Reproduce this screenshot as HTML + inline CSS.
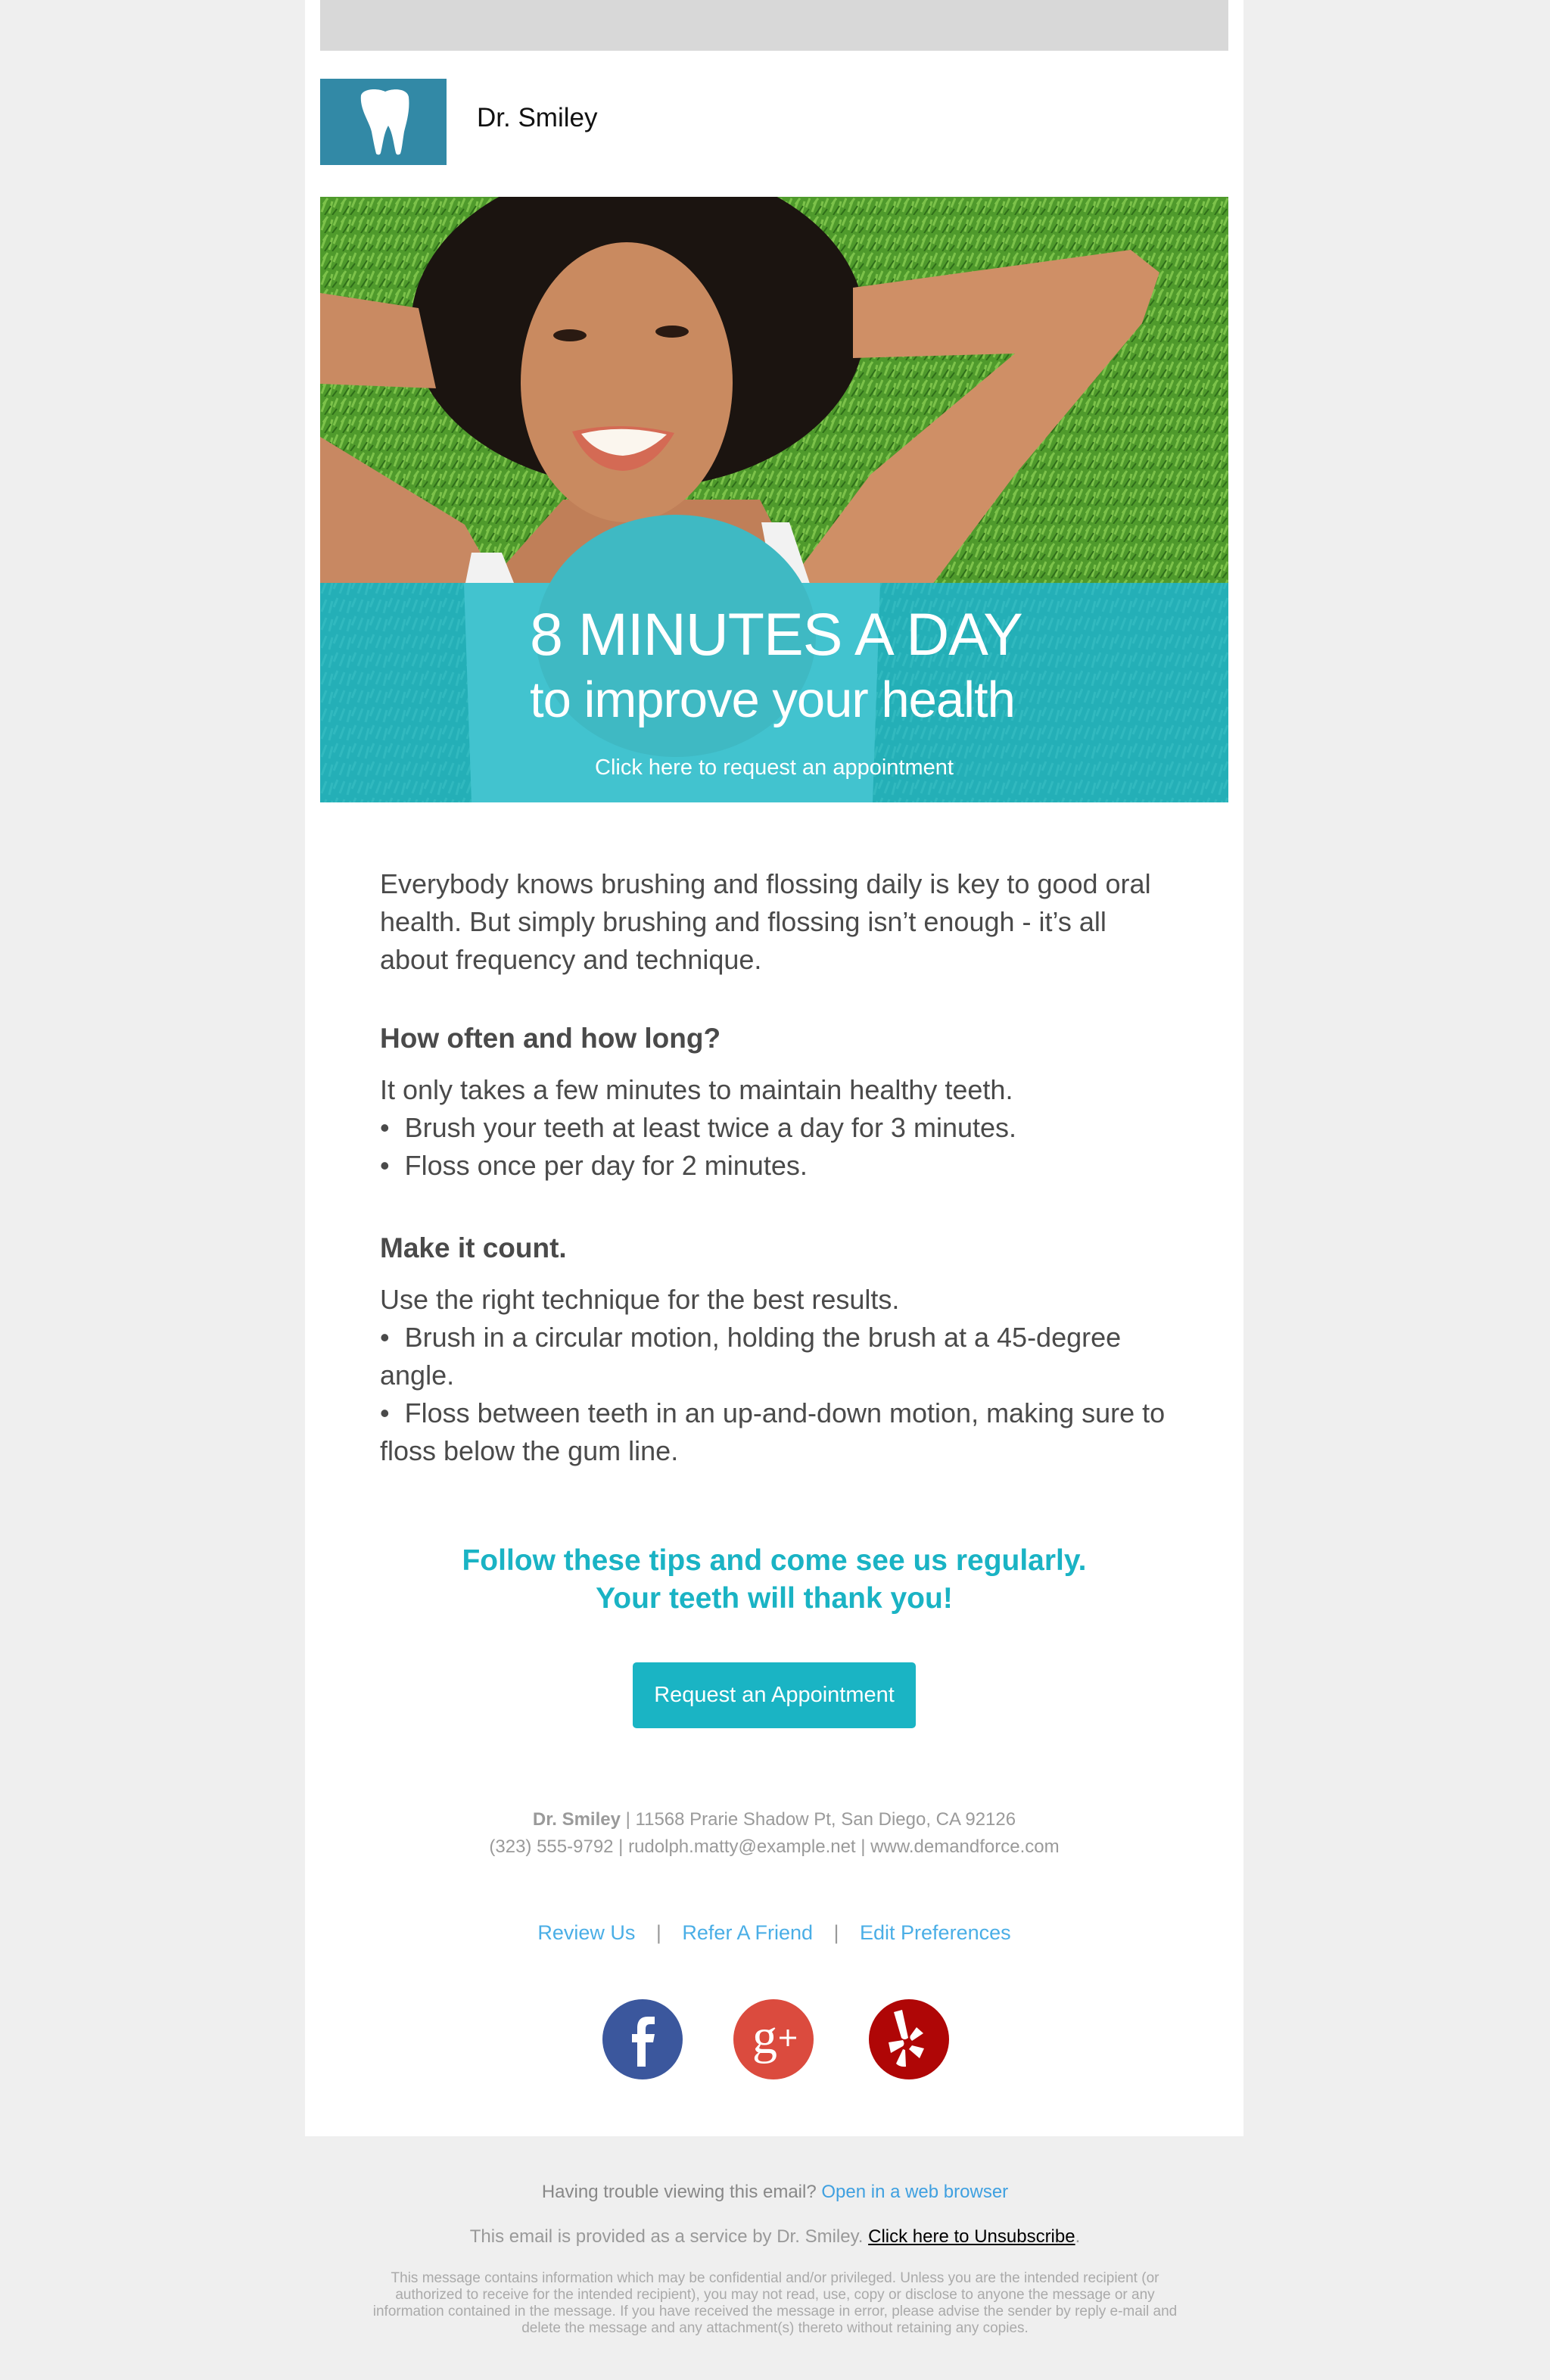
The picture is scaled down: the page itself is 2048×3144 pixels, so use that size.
<!DOCTYPE html>
<html><head><meta charset="utf-8">
<style>
*{margin:0;padding:0;box-sizing:border-box}
body{width:2048px;height:3144px;background:#efefef;font-family:"Liberation Sans",Arial,sans-serif;position:relative;overflow:hidden}
.abs{position:absolute}
#wrap{position:absolute;left:403px;top:0;width:1240px;height:2822px;background:#fff}
.body{position:absolute;left:502px;width:1045px;color:#4a4a4a;font-size:36px;line-height:50px}
.c{position:absolute;left:403px;width:1240px;text-align:center}
</style></head><body>
<div id="wrap"></div>
<div class="abs" style="left:423px;top:0;width:1200px;height:67px;background:#d8d8d8"></div>
<div class="abs" style="left:423px;top:104px;width:167px;height:114px;background:#3289a6">
<svg width="167" height="114" viewBox="0 0 167 114"><path d="M54 22 C57 13 75 12 86 17 C97 12 115 13 117 24 C119 42 114 58 111 70 C109 82 108 94 106 99 C104 101 101 101 100 98 C97 86 96 72 90 62 C84 72 83 86 80 98 C79 101 76 101 74 99 C72 91 70 81 68 70 C65 57 52 40 54 22 Z" fill="#fff"/></svg>
</div>
<div class="abs" style="left:630px;top:136px;font-size:35px;color:#111">Dr. Smiley</div>

<div class="abs" style="left:423px;top:260px;width:1200px;height:800px;overflow:hidden">
<svg width="1200" height="800" viewBox="0 0 1200 800">
<defs>
<pattern id="g" width="24" height="24" patternUnits="userSpaceOnUse"><rect width="24" height="24" fill="#4f9a2c"/><path d="M2 20 L8 4 M12 22 L16 6 M18 14 L23 2 M4 10 L10 2" stroke="#7cc24a" stroke-width="3"/><path d="M6 24 L14 12 M16 24 L22 16" stroke="#2f6e1a" stroke-width="2"/></pattern>
<pattern id="g2" width="24" height="24" patternUnits="userSpaceOnUse"><rect width="24" height="24" fill="#23aab0"/><path d="M2 20 L8 4 M12 22 L16 6 M18 14 L23 2" stroke="#3fc0c2" stroke-width="3"/></pattern>
</defs>
<rect width="1200" height="800" fill="url(#g)"/>
<ellipse cx="420" cy="170" rx="300" ry="215" fill="#1b1410"/>
<polygon points="0,127 130,147 153,253 0,247" fill="#c98a62"/>
<polygon points="0,317 191,433 240,520 0,520" fill="#c88862"/>
<polygon points="704,120 1071,70 1109,100 1086,167 918,367 803,520 612,520 727,367 918,207 704,213" fill="#cf8f66"/>
<polygon points="321,400 581,400 643,520 214,520" fill="#c07f58"/>
<polygon points="200,470 240,470 260,520 190,520" fill="#f2f2f2"/>
<polygon points="583,430 620,430 650,520 600,520" fill="#f2f2f2"/>
<ellipse cx="405" cy="245" rx="140" ry="185" fill="#c98a60"/>
<ellipse cx="330" cy="183" rx="22" ry="8" fill="#2a1a12"/>
<ellipse cx="465" cy="178" rx="22" ry="8" fill="#2a1a12"/>
<path d="M333 310 Q398 295 468 312 Q440 360 400 362 Q355 360 333 310 Z" fill="#d46a54"/>
<path d="M345 313 Q398 300 458 314 Q430 340 400 342 Q365 340 345 313 Z" fill="#fbf6ee"/>
<rect y="510" width="1200" height="290" fill="url(#g2)"/>
<path d="M0 510 H1200 V800 H0 Z" fill="#27b2bd" opacity="0.55"/>
<polygon points="190,510 740,510 730,800 200,800" fill="#42c3cf"/>
<ellipse cx="470" cy="580" rx="185" ry="160" fill="#3fb9c3"/>
</svg>
</div>

<div class="abs" style="left:700px;top:793px;font-size:79px;color:#fff;line-height:90px;letter-spacing:-1px">8 MINUTES A DAY</div>
<div class="abs" style="left:700px;top:880px;font-size:67px;color:#fff;line-height:90px;letter-spacing:-1px">to improve your health</div>
<div class="abs" style="left:423px;width:1200px;top:998px;text-align:center;font-size:29px;color:#fff">Click here to request an appointment</div>

<div class="body" style="top:1143px">Everybody knows brushing and flossing daily is key to good oral health. But simply brushing and flossing isn’t enough - it’s all about frequency and technique.</div>
<div class="body" style="top:1347px;font-size:37px;font-weight:bold">How often and how long?</div>
<div class="body" style="top:1415px">It only takes a few minutes to maintain healthy teeth.<br>•&nbsp; Brush your teeth at least twice a day for 3 minutes.<br>•&nbsp; Floss once per day for 2 minutes.</div>
<div class="body" style="top:1624px;font-size:37px;font-weight:bold">Make it count.</div>
<div class="body" style="top:1692px">Use the right technique for the best results.<br>•&nbsp; Brush in a circular motion, holding the brush at a 45-degree angle.<br>•&nbsp; Floss between teeth in an up-and-down motion, making sure to floss below the gum line.</div>

<div class="c" style="top:2037px;font-size:39px;line-height:50px;color:#1ab3c4;font-weight:bold">Follow these tips and come see us regularly.<br>Your teeth will thank you!</div>
<div class="abs" style="left:836px;top:2196px;width:374px;height:87px;background:#1ab4c4;border-radius:5px;color:#fff;font-size:29px;text-align:center;line-height:87px">Request an Appointment</div>

<div class="c" style="top:2386px;font-size:24px;line-height:36px;color:#9a9a9a"><b>Dr. Smiley</b> | 11568 Prarie Shadow Pt, San Diego, CA 92126<br>(323) 555-9792 | rudolph.matty@example.net | www.demandforce.com</div>
<div class="c" style="top:2538px;font-size:27px;color:#4aaee6">Review Us <span style="color:#999;margin:0 20px">|</span> Refer A Friend <span style="color:#999;margin:0 20px">|</span> Edit Preferences</div>

<svg class="abs" style="left:796px;top:2640px" width="460" height="108" viewBox="0 0 460 108">
<circle cx="53" cy="54" r="53" fill="#3b579d"/>
<path d="M57 90 V58 H67 L69 47 H57 V40 C57 36 59 34 63 34 H69 V24 H60 C50 24 46 30 46 39 V47 H39 V58 H46 V90 Z" fill="#fff"/>
<circle cx="226" cy="54" r="53" fill="#db4b3e"/>
<text x="198" y="72" font-family="Liberation Serif,serif" font-size="66" fill="#fff">g</text>
<path d="M234 52 H256 M245 41 V63" stroke="#fff" stroke-width="3"/>
<circle cx="405" cy="54" r="53" fill="#af0606"/>
<path d="M385 18 L396 15 L404 52 Q399 56 395 52 Z" fill="#fff"/>
<path d="M415 38 L424 46 L409 56 Q405 52 407 49 Z" fill="#fff"/>
<path d="M378 58 L397 55 Q400 60 397 63 L381 72 Z" fill="#fff"/>
<path d="M409 62 L425 66 L419 79 L405 67 Z" fill="#fff"/>
<path d="M400 68 L401 90 Q393 91 388 86 L397 67 Z" fill="#fff"/>
</svg>

<div class="abs" style="left:0;width:2048px;top:2882px;text-align:center;font-size:24px;color:#888">Having trouble viewing this email? <span style="color:#3fa0e0">Open in a web browser</span></div>
<div class="abs" style="left:0;width:2048px;top:2941px;text-align:center;font-size:24px;color:#999">This email is provided as a service by Dr. Smiley. <span style="color:#000;text-decoration:underline">Click here to Unsubscribe</span>.</div>
<div class="abs" style="left:484px;width:1080px;top:2999px;text-align:center;font-size:19px;line-height:22px;color:#aaa">This message contains information which may be confidential and/or privileged. Unless you are the intended recipient (or authorized to receive for the intended recipient), you may not read, use, copy or disclose to anyone the message or any information contained in the message. If you have received the message in error, please advise the sender by reply e-mail and delete the message and any attachment(s) thereto without retaining any copies.</div>
</body></html>
